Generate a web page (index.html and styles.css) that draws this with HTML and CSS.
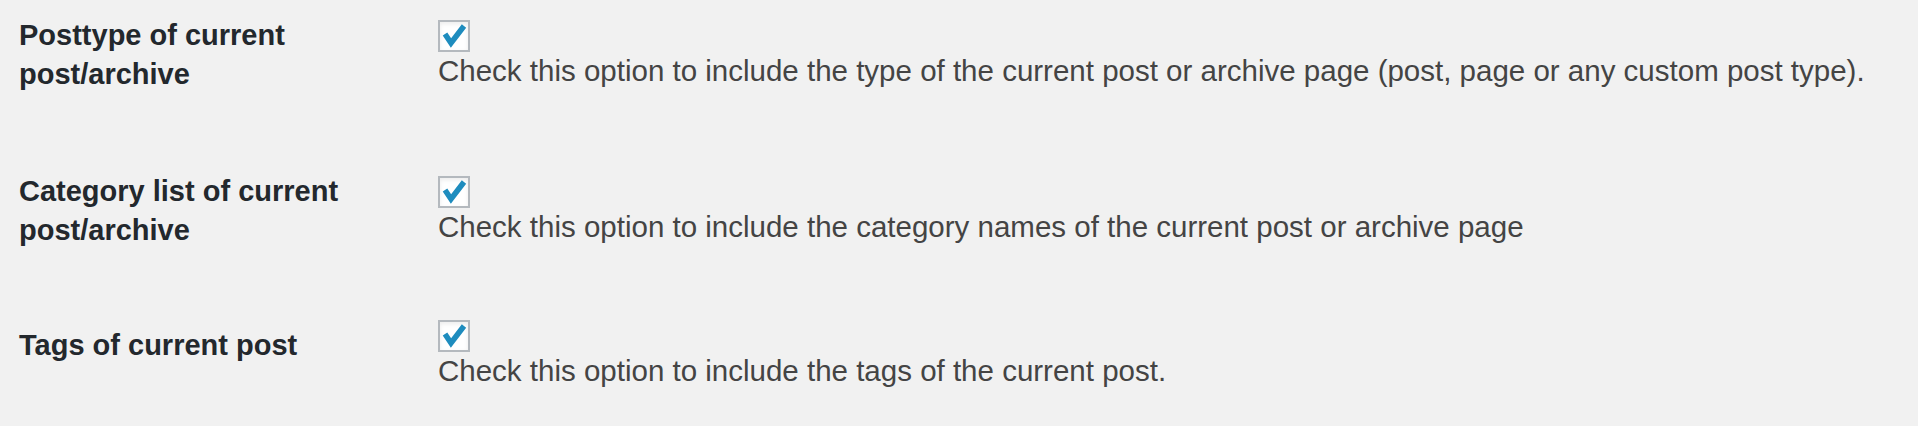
FILE: index.html
```html
<!DOCTYPE html>
<html lang="en">
  <head>
    <meta charset="utf-8" />
    <title>Settings</title>
    <link rel="stylesheet" href="styles.css">
  </head>

  <body>
    <div class="form-table">
      <div class="setting setting-first">
        <div class="setting-label">Posttype of current post/archive</div>
        <div class="setting-field">
          <span class="checkbox">
            <svg viewBox="0 0 28 28" width="28" height="28"><polyline points="5,12 11,21 24,4" /></svg>
          </span>
          <p class="description">Check this option to include the type of the current post or archive page (post, page or any custom post type).</p>
        </div>
      </div>

      <div class="setting">
        <div class="setting-label">Category list of current post/archive</div>
        <div class="setting-field">
          <span class="checkbox">
            <svg viewBox="0 0 28 28" width="28" height="28"><polyline points="5,12 11,21 24,4" /></svg>
          </span>
          <p class="description">Check this option to include the category names of the current post or archive page</p>
        </div>
      </div>

      <div class="setting setting-single">
        <div class="setting-label">Tags of current post</div>
        <div class="setting-field">
          <span class="checkbox">
            <svg viewBox="0 0 28 28" width="28" height="28"><polyline points="5,12 11,21 24,4" /></svg>
          </span>
          <p class="description">Check this option to include the tags of the current post.</p>
        </div>
      </div>
    </div>
  </body>
</html>
```

FILE: styles.css
```css
body {
  margin: 0;
  background-color: #f1f1f1;
  font-family: "Liberation Sans", Arial, sans-serif;
  color: #444;
}

.form-table {
  padding: 16px 0 0 19px;
}

.setting {
  display: grid;
  grid-template-columns: 419px 1fr;
  align-items: center;
  margin-bottom: 70px;
}

.setting-first {
  margin-bottom: 78px;
}

.setting:last-child {
  margin-bottom: 0;
}

.setting-label {
  max-width: 370px;
  font-size: 29px;
  font-weight: bold;
  line-height: 39px;
  color: #23282d;
}

/* one line label sits a bit higher than the field centre */
.setting-single .setting-label {
  margin-bottom: 20px;
}

.setting-field {
  display: flex;
  flex-direction: column;
  align-items: flex-start;
}

/*=============================================*/

.checkbox {
  display: block;
  width: 28px;
  height: 28px;
  border: 2px solid #b4b9be;
  background-color: #fff;
  box-shadow: inset 0 2px 4px rgba(0, 0, 0, 0.08);
}

.checkbox svg {
  display: block;
  fill: none;
  stroke: #1e8cbe;
  stroke-width: 5.5;
}

.description {
  margin: 0;
  font-size: 29.5px;
  line-height: 38px;
}
```
